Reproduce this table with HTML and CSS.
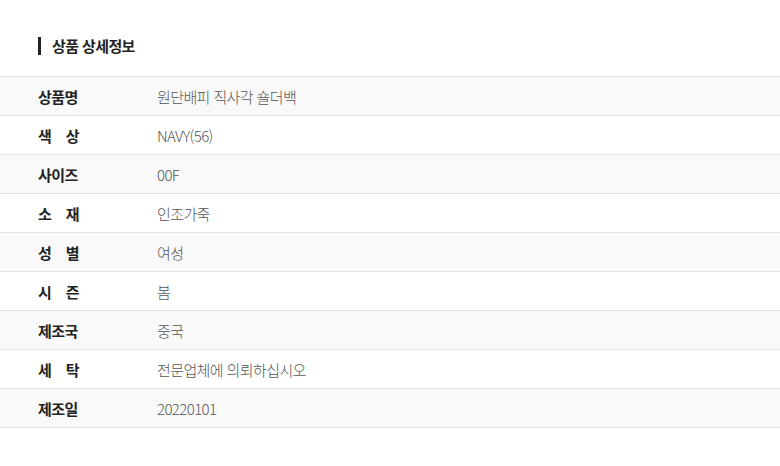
FILE: index.html
```html
<!DOCTYPE html>
<html lang="ko">
<head>
<meta charset="utf-8">
<link rel="stylesheet" href="styles.css">
</head>
<body>
<section class="detail">
  <h2 class="title">상품 상세정보</h2>
  <dl class="info">
    <div class="row"><dt class="lbl">상품명</dt><dd class="val">원단배피 직사각 숄더백</dd></div>
    <div class="row"><dt class="lbl"><span>색</span><span>상</span></dt><dd class="val">NAVY(56)</dd></div>
    <div class="row"><dt class="lbl">사이즈</dt><dd class="val">00F</dd></div>
    <div class="row"><dt class="lbl"><span>소</span><span>재</span></dt><dd class="val">인조가죽</dd></div>
    <div class="row"><dt class="lbl"><span>성</span><span>별</span></dt><dd class="val">여성</dd></div>
    <div class="row"><dt class="lbl"><span>시</span><span>즌</span></dt><dd class="val">봄</dd></div>
    <div class="row"><dt class="lbl">제조국</dt><dd class="val">중국</dd></div>
    <div class="row"><dt class="lbl"><span>세</span><span>탁</span></dt><dd class="val">전문업체에 의뢰하십시오</dd></div>
    <div class="row"><dt class="lbl">제조일</dt><dd class="val">20220101</dd></div>
  </dl>
</section>
</body>
</html>
```
FILE: styles.css
```css
* { box-sizing: border-box; }
html, body { margin: 0; padding: 0; background: #fff; }
body {
  font-family: "Noto Sans CJK KR", "Noto Sans", sans-serif;
  color: #222;
}
.detail { padding-top: 37px; }
.title {
  margin: 0 0 21px 38px;
  padding-left: 11px;
  border-left: 3px solid #222;
  font-size: 15px;
  font-weight: 700;
  line-height: 18px;
  height: 18px;
  letter-spacing: -0.6px;
  display: flex;
  align-items: center;
}
.info {
  margin: 0;
  border-top: 1px solid #e3e3e3;
}
.row {
  display: grid;
  grid-template-columns: 157px 1fr;
  align-items: center;
  height: 39px;
  border-bottom: 1px solid #e3e3e3;
  font-size: 15px;
  letter-spacing: -0.6px;
}
.row:nth-child(odd) { background: #f9f9f9; }
.lbl {
  margin: 0;
  padding-left: 38px;
  padding-right: 78px;
  display: flex;
  font-weight: 700;
  color: #222;
  white-space: nowrap;
}
.lbl span + span { margin-left: auto; }
.val {
  margin: 0;
  font-weight: 300;
  color: #555;
}
```
